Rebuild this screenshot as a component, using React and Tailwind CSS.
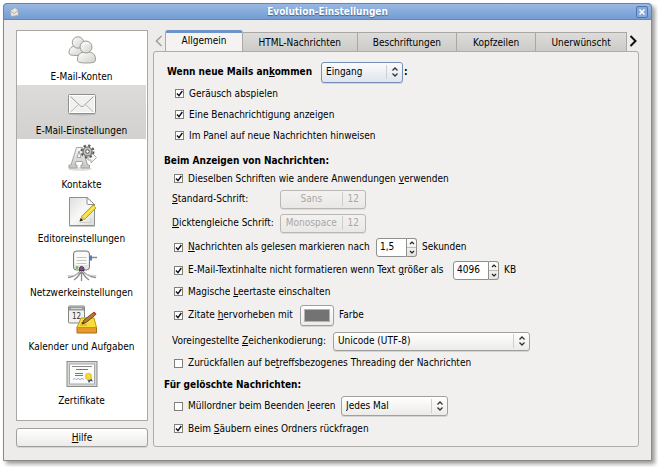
import { useState } from "react";

function AccountsIcon() {
  return (
    <svg width="30" height="30" viewBox="0 0 30 30" aria-hidden="true">
      <defs>
        <linearGradient id="person" x1="0" y1="0" x2="1" y2="1">
          <stop offset="0" stopColor="#ffffff" />
          <stop offset="1" stopColor="#cfcfcb" />
        </linearGradient>
      </defs>
      <g fill="url(#person)" stroke="#9b9b97" strokeWidth="1">
        <path d="M2 18 C2 13 4.500 11 10 11 S17 13 17 18 C17 20 14 20.500 9.500 20.500 S2 20 2 18Z" />
        <circle cx="11" cy="7.500" r="5.700" />
        <path d="M10.500 25 C10.500 19 13 17 19.500 17 S28.500 19 28.500 25 C28.500 27.500 25 28 19.500 28 S10.500 27.500 10.500 25Z" />
        <circle cx="19" cy="12" r="6" />
      </g>
      <path d="M15.500 10 C17.500 7.500 20.500 7.500 22.500 9.500" stroke="#fff" fill="none" />
    </svg>
  );
}

function MailIcon() {
  return (
    <svg width="30" height="30" viewBox="0 0 30 30" aria-hidden="true">
      <ellipse cx="15" cy="25" rx="14" ry="1.500" fill="#b9b9b7" />
      <rect x="1.500" y="5.500" width="27" height="19" rx="1" fill="#f1f1ef" stroke="#8f8f8d" />
      <rect x="2.500" y="6.500" width="25" height="17" fill="none" stroke="#fff" />
      <path d="M3.500 7.500 L13.500 17 Q15 18.200 16.500 17 L26.500 7.500" fill="none" stroke="#a3a3a1" />
      <path d="M3.500 23 L11.500 15.500 M26.500 23 L18.500 15.500" fill="none" stroke="#b9b9b7" />
    </svg>
  );
}

function ContactsIcon() {
  return (
    <svg width="30" height="30" viewBox="0 0 30 30" aria-hidden="true">
      <defs>
        <linearGradient id="slab" x1="0" y1="0" x2="0" y2="1">
          <stop offset="0" stopColor="#f8f8f6" />
          <stop offset="1" stopColor="#c4c4c1" />
        </linearGradient>
      </defs>
      <ellipse cx="13" cy="26" rx="12" ry="1.800" fill="#dededc" />
      <path d="M2 25 V22 H4 L9.500 4.500 H15.500 L20.500 22 H22.500 V25 H14 V22 H16 L15 18.500 H9 L8 22 H10 V25Z M10 14.500 H14 L12 8Z" fill="url(#slab)" stroke="#a3a3a1" strokeWidth="1" fillRule="evenodd" />
      <path d="M21 12 H25 V10 L29.500 14.500 L24 20 V17 H21Z" fill="#f6f6f4" stroke="#a8a8a6" />
      <circle cx="20.500" cy="8.500" r="6" fill="none" stroke="#565856" strokeWidth="2" strokeDasharray="2.350 2.350" />
      <circle cx="20.500" cy="8.500" r="4.500" fill="#c0c2bf" stroke="#6b6d6b" strokeWidth="1.200" />
      <circle cx="20.500" cy="8.500" r="1.800" fill="#fff" stroke="#565856" />
    </svg>
  );
}

function EditorIcon() {
  return (
    <svg width="30" height="30" viewBox="0 0 30 30" aria-hidden="true">
      <defs>
        <linearGradient id="paper" x1="0" y1="0" x2="1" y2="1">
          <stop offset="0" stopColor="#dededc" />
          <stop offset="0.500" stopColor="#f8f8f7" />
          <stop offset="1" stopColor="#dcdcda" />
        </linearGradient>
      </defs>
      <path d="M2 29.500 H28" stroke="#c9c9c7" />
      <path d="M2.500 0.500 H20 L27.500 7.500 V28.500 H2.500Z" fill="url(#paper)" stroke="#8d8f8c" />
      <path d="M20 0.500 L27.500 7.500 H21 Q20 7.500 20 6.500Z" fill="#fff" stroke="#8d8f8c" />
      <path d="M13 25.500 H24 V21" stroke="#cfcfcd" fill="none" />
      <path d="M13 24 L15 19 L26 8 L29 11 L18 22Z" fill="#f5dc2e" stroke="#b99b08" strokeWidth="0.900" />
      <path d="M16.500 20.500 L27.500 9.500" stroke="#fff27c" strokeWidth="1" />
      <path d="M13 24 L14.800 19.200 L17.800 22.200Z" fill="#dcb88a" />
      <path d="M12.500 24.500 L13.800 21 L16 23.300Z" fill="#222" />
    </svg>
  );
}

function NetworkIcon() {
  return (
    <svg width="30" height="32" viewBox="0 0 30 32" aria-hidden="true">
      <path d="M14.500 19 C11 25 6 27 1 27.500 M14.500 19 C13 25 10 28 7 30 M14.500 19 C18 25 23 27 29 27.500 M14.500 19 C16 25 19 28 22 30 M14.500 18 V31" fill="none" stroke="#8b8d8a" strokeWidth="1.300" />
      <path d="M14 21 C10 26 5 26 0.500 25.500 M15 21 C19 26 24 25 29.500 25.500" fill="none" stroke="#c9cac8" />
      <path d="M23 7.500 H30" stroke="#888a88" strokeWidth="1.500" />
      <rect x="22" y="5.500" width="3" height="5" fill="#4f7fb5" />
      <rect x="6.500" y="1" width="16" height="19" rx="3" fill="#e4e4e2" stroke="#777976" />
      <rect x="7.500" y="2" width="14" height="13" rx="2" fill="#fafaf9" />
      <path d="M9.500 7.500 H19.500 M9.500 10.500 H19.500 M9.500 13.500 H19.500" stroke="#c6c7c5" />
      <circle cx="10" cy="17.500" r="1.300" fill="#56c11b" />
      <path d="M12.500 20.500 V18.500 Q12.500 16.500 14.500 16.500 T17 18.500 V20.500Z" fill="#7a5584" stroke="#4d3154" />
    </svg>
  );
}

function CalendarIcon() {
  return (
    <svg width="30" height="30" viewBox="0 0 30 30" aria-hidden="true">
      <rect x="1.500" y="1" width="16" height="17" rx="1" fill="#f1f1ef" stroke="#858784" />
      <rect x="2" y="1.500" width="15" height="4" fill="#9a9c99" />
      <path d="M4 3.500 H15" stroke="#d5d6d4" />
      <text x="5" y="13.500" fontSize="8" fontFamily="DejaVu Sans Condensed, DejaVu Sans, sans-serif" fill="#333">12</text>
      <path d="M10 22 H29.500 V28 H10Z" fill="#e79a2c" stroke="#b06b12" />
      <path d="M10 22.500 L14 13 H27 L29.500 22.500Z" fill="#f7dc3c" stroke="#bd9a15" />
      <path d="M13 20 H20 M14 17.500 H18" stroke="#caa51d" />
      <path d="M15 19 L17 15 L26.500 7.500 L28.500 9.800 L19 17.500Z" fill="#b9783a" stroke="#62401e" strokeWidth="0.900" />
      <path d="M26 7.500 L27.500 6.800 L29.500 9 L28.500 10Z" fill="#d92626" />
      <path d="M15 19 L16 16.900 L17.400 18.200Z" fill="#222" />
    </svg>
  );
}

function CertificateIcon() {
  return (
    <svg width="32" height="30" viewBox="0 0 32 30" aria-hidden="true">
      <rect x="1" y="2.500" width="30" height="25" fill="#d6d8d5" stroke="#8b8d8a" />
      <rect x="3.500" y="5" width="25" height="20" fill="#fbfbfa" stroke="#a7a9a6" />
      <path d="M6 7.500 H26" stroke="#8a8c89" />
      <path d="M10 10.500 H22 M9 14.500 H17 M9 16.500 H17" stroke="#777976" />
      <path d="M7 20.500 L9 19.500 L10 20.500 L12 19.500 L14 20.500 L16 19.500 L18 20.500" fill="none" stroke="#95acd0" />
      <path d="M21 20 L23 24 L24.500 22 L27 22.500 L25 19Z" fill="#2f5590" />
      <circle cx="22.500" cy="17.500" r="3.200" fill="#f6d935" stroke="#e5c63a" />
    </svg>
  );
}

const categories = [
  { label: "E-Mail-Konten", Icon: AccountsIcon },
  { label: "E-Mail-Einstellungen", Icon: MailIcon },
  { label: "Kontakte", Icon: ContactsIcon },
  { label: "Editoreinstellungen", Icon: EditorIcon },
  { label: "Netzwerkeinstellungen", Icon: NetworkIcon },
  { label: "Kalender und Aufgaben", Icon: CalendarIcon },
  { label: "Zertifikate", Icon: CertificateIcon },
];

const tabs = [
  { label: "Allgemein", grow: "grow-[77]" },
  { label: "HTML-Nachrichten", grow: "grow-[115]" },
  { label: "Beschriftungen", grow: "grow-[100]" },
  { label: "Kopfzeilen", grow: "grow-[79]" },
  { label: "Unerwünscht", grow: "grow-[91]" },
];

function Key({ children }) {
  return <span className="underline underline-offset-1">{children}</span>;
}

function Check({ id, checked = false, height = "h-[21px]", width = "", children }) {
  return (
    <div className={`flex shrink-0 items-center gap-[5px] ${height} ${width}`}>
      <span className="grid size-[9px] shrink-0">
        <input
          id={id}
          type="checkbox"
          defaultChecked={checked}
          className="peer col-start-1 row-start-1 size-[9px] appearance-none border border-[#7f7f7c] bg-white"
        />
        <svg
          viewBox="0 0 9 9"
          className="pointer-events-none col-start-1 row-start-1 hidden size-[9px] peer-checked:block"
          aria-hidden="true"
        >
          <path d="M2 4.500 L4 6.700 L7.300 2" fill="none" stroke="#111" strokeWidth="1.400" />
        </svg>
      </span>
      <label htmlFor={id} className="whitespace-nowrap">
        {children}
      </label>
    </div>
  );
}

function Chevrons() {
  return (
    <svg width="8" height="10" viewBox="0 0 8 10" fill="none" stroke="#333" strokeWidth="1.300" aria-hidden="true">
      <path d="M1.500 3.500 L4 1 L6.500 3.500 M1.500 6.500 L4 9 L6.500 6.500" />
    </svg>
  );
}

function Dropdown({ id, label, value, size, focused = false }) {
  const look = focused
    ? "border-[#7590b8] bg-gradient-to-b from-[#fafbfd] to-[#dfe5ee]"
    : "border-[#a0a09d] bg-gradient-to-b from-white to-[#ecebe9]";
  return (
    <span className={`grid shrink-0 items-center ${size}`}>
      <select
        id={id}
        aria-label={label}
        className={`col-start-1 row-start-1 h-full w-full appearance-none rounded-[3px] border pl-1 shadow-[0_1px_0_#d4d3d1] ${look}`}
      >
        <option>{value}</option>
      </select>
      <span className="pointer-events-none col-start-1 row-start-1 flex h-[14px] items-center justify-self-end border-l border-[#cfcecb] px-1">
        <Chevrons />
      </span>
    </span>
  );
}

function SpinBox({ id, label, value, width }) {
  return (
    <span className="flex h-[19px] shrink-0">
      <input
        id={id}
        aria-label={label}
        defaultValue={value}
        className={`rounded-l-[3px] border border-[#8f8f8c] bg-white pl-[3px] ${width}`}
      />
      <span className="flex w-[10px] flex-col rounded-r-[3px] border border-l-0 border-[#8f8f8c] bg-gradient-to-b from-white to-[#e4e3e1]">
        <button type="button" aria-label="Mehr" className="flex flex-1 items-center justify-center border-b border-[#bdbcb9]">
          <svg width="6" height="4" viewBox="0 0 6 4" fill="none" stroke="#222" strokeWidth="1.200">
            <path d="M1 3 L3 1 L5 3" />
          </svg>
        </button>
        <button type="button" aria-label="Weniger" className="flex flex-1 items-center justify-center">
          <svg width="6" height="4" viewBox="0 0 6 4" fill="none" stroke="#222" strokeWidth="1.200">
            <path d="M1 1 L3 3 L5 1" />
          </svg>
        </button>
      </span>
    </span>
  );
}

function FontButton({ id, name, size }) {
  return (
    <button
      id={id}
      type="button"
      disabled
      className="flex h-[19px] w-[86px] items-center rounded-[3px] border border-[#b9b8b5] bg-gradient-to-b from-[#f3f2f1] to-[#e9e8e6] text-[#a9a8a5] shadow-[0_1px_0_#dddcda]"
    >
      <span className="flex-1 text-center">{name}</span>
      <span className="border-l border-[#cfcecb] pl-[5px] pr-[6px]">{size}</span>
    </button>
  );
}

function Sidebar() {
  const [selected, setSelected] = useState(1);
  return (
    <div className="flex w-[132px] shrink-0 flex-col gap-[7px]">
      <nav className="flex-1 border border-[#a9a8a5] bg-white pr-px">
        {categories.map(({ label, Icon }, i) => (
          <button
            key={label}
            type="button"
            onClick={() => setSelected(i)}
            className={`flex h-[54px] w-full flex-col items-center justify-between pb-px pt-[4px] ${
              i === selected ? "bg-gradient-to-b from-[#dcdbd9] to-[#d2d1cf]" : ""
            }`}
          >
            <span className="flex h-[30px] items-center">
              <Icon />
            </span>
            <span className="whitespace-nowrap leading-[14px]">{label}</span>
          </button>
        ))}
      </nav>
      <button
        type="button"
        className="h-[19px] rounded-[3px] border border-[#a0a09d] bg-gradient-to-b from-white to-[#ecebe9] shadow-[0_1px_0_#d4d3d1]"
      >
        <Key>H</Key>ilfe
      </button>
    </div>
  );
}

function TabBar() {
  const [active, setActive] = useState(0);
  return (
    <div className="flex h-[21px] items-end">
      <button type="button" aria-label="Vorherige Reiter" className="flex h-full w-[12px] shrink-0 items-center justify-center">
        <svg width="8" height="12" viewBox="0 0 8 12" fill="none" stroke="#a3a29f" strokeWidth="1.600">
          <path d="M6.500 1 L1.500 6 L6.500 11" />
        </svg>
      </button>
      <div role="tablist" className="flex h-full flex-1 items-end">
        {tabs.map(({ label, grow }, i) => (
          <button
            key={label}
            type="button"
            role="tab"
            aria-selected={i === active}
            onClick={() => setActive(i)}
            className={`basis-0 whitespace-nowrap ${grow} ${
              i === active
                ? "-mb-px h-[22px] rounded-t-[3px] border-x border-t-[3px] border-x-[#a9a8a5] border-t-[#6d93c9] bg-[#f4f3f2] pb-[3px]"
                : "h-[19px] border-r border-t border-[#a9a8a5] bg-gradient-to-b from-[#dddcda] to-[#cccbc8] pt-px"
            }`}
          >
            {label}
          </button>
        ))}
      </div>
      <button type="button" aria-label="Weitere Reiter" className="flex h-full w-[12px] shrink-0 items-center justify-center">
        <svg width="8" height="12" viewBox="0 0 8 12" fill="none" stroke="#111" strokeWidth="2">
          <path d="M1.500 1 L6.500 6 L1.500 11" />
        </svg>
      </button>
    </div>
  );
}

function GeneralPanel() {
  return (
    <div className="flex-1 rounded-[3px] border border-[#adacaa] bg-[#f1f0ef] pb-[6px] pl-[10px] pt-[9px]">
      <div className="flex h-[22px] items-center gap-[3px] pl-[3px]">
        <label htmlFor="arrival" className="w-[151px] whitespace-nowrap font-bold">
          Wenn neue Mails an<Key>k</Key>ommen
        </label>
        <span className="flex items-center gap-px">
          <Dropdown id="arrival" value="Eingang" size="h-[21px] w-[82px]" focused />
          <span className="font-bold">:</span>
        </span>
      </div>
      <div className="pl-[11px]">
        <Check id="sound" checked>Geräusch abspielen</Check>
        <Check id="notify" checked>Eine Benachrichtigung anzeigen</Check>
        <Check id="panel" checked>Im Panel auf neue Nachrichten hinweisen</Check>
      </div>

      <h2 className="mt-[6px] h-[18px] font-bold leading-[18px]">Beim Anzeigen von Nachrichten:</h2>
      <div className="pl-[10px]">
        <Check id="same-fonts" checked height="h-[17px]">
          Dieselben Schriften wie andere Anwendungen <Key>v</Key>erwenden
        </Check>
      </div>
      <div className="pl-2">
        <div className="flex h-6 items-center">
          <label htmlFor="font" className="w-[108px]">
            <Key>S</Key>tandard-Schrift:
          </label>
          <FontButton id="font" name="Sans" size="12" />
        </div>
        <div className="flex h-6 items-center">
          <label htmlFor="mono" className="w-[108px] whitespace-nowrap">
            <Key>D</Key>icktengleiche Schrift:
          </label>
          <FontButton id="mono" name="Monospace" size="12" />
        </div>
      </div>
      <div className="pl-[10px]">
        <div className="flex h-6 items-center gap-[5px]">
          <Check id="mark-read" checked width="w-[197px]">
            <Key>N</Key>achrichten als gelesen markieren nach
          </Check>
          <SpinBox id="seconds" label="Sekunden" value="1,5" width="w-[31px]" />
          <label htmlFor="seconds">Sekunden</label>
        </div>
        <div className="flex h-[22px] items-center gap-[5px]">
          <Check id="no-format" checked width="w-[274px]">
            E-Mail-Textinhalte nicht formatieren wenn Text <Key>g</Key>rößer als
          </Check>
          <SpinBox id="limit" label="KB" value="4096" width="w-[36px]" />
          <label htmlFor="limit">KB</label>
        </div>
        <Check id="magic-space" checked>
          Magische <Key>L</Key>eertaste einschalten
        </Check>
        <div className="flex h-[26px] items-center gap-[5px]">
          <Check id="quotes" checked width="w-[121px]">
            Zitate <Key>h</Key>ervorheben mit
          </Check>
          <button
            type="button"
            id="quote-color"
            aria-label="Farbe wählen"
            className="flex h-[21px] w-[34px] items-center justify-center rounded-[3px] border border-[#a0a09d] bg-gradient-to-b from-white to-[#ecebe9] shadow-[0_1px_0_#d4d3d1]"
          >
            <span className="h-[13px] w-[26px] border border-[#b5b4b2] bg-[#737373]" />
          </button>
          <label htmlFor="quote-color">Farbe</label>
        </div>
      </div>
      <div className="flex h-[26px] items-center gap-[5px] pl-2">
        <label htmlFor="charset" className="w-[156px] whitespace-nowrap">
          Voreingestellte <Key>Z</Key>eichenkodierung:
        </label>
        <Dropdown id="charset" value="Unicode (UTF-8)" size="h-[19px] w-[197px]" />
      </div>
      <div className="pl-[10px]">
        <Check id="threading" height="h-[18px]">
          Zurückfallen auf be<Key>t</Key>reffsbezogenes Threading der Nachrichten
        </Check>
      </div>

      <h2 className="mt-1 h-[18px] font-bold leading-[18px]">Für gelöschte Nachrichten:</h2>
      <div className="pl-[10px]">
        <div className="flex h-6 items-center gap-[5px]">
          <Check id="trash" width="w-[162px]">
            Müllordner beim Beenden <Key>l</Key>eeren
          </Check>
          <Dropdown id="trash-when" label="Zeitpunkt" value="Jedes Mal" size="h-[20px] w-[107px]" />
        </div>
        <Check id="expunge" checked>
          Beim <Key>S</Key>äubern eines Ordners rückfragen
        </Check>
      </div>
    </div>
  );
}

export default function App() {
  return (
    <div className="flex min-h-screen flex-col bg-white pb-[6px] pl-[3px] pr-[6px] pt-[3px] font-['DejaVu_Sans_Condensed','DejaVu_Sans',sans-serif] text-[10px] leading-[14px] text-black">
      <main className="flex flex-1 flex-col rounded-t-[4px] border border-[#8a8a8a] bg-[#edeceb] shadow-[3px_3px_4px_#999]">
        <header className="-mx-px -mt-px flex h-[17px] items-center rounded-t-[4px] border border-[#5f86bd] bg-gradient-to-b from-[#98b8e2] to-[#749dd3] pl-[5px] pr-[3px]">
          <svg width="10" height="10" viewBox="0 0 10 10" aria-hidden="true">
            <path d="M1 4 L6 0.500 L9 3 L9.500 8.500 L2 9.500Z" fill="#e4e4e2" stroke="#a2a29f" strokeWidth="0.800" />
            <path d="M1.500 4.500 L5.500 6.500 L8.500 3.500" fill="none" stroke="#a2a29f" strokeWidth="0.800" />
          </svg>
          <h1 className="flex-1 text-center font-bold leading-[14px] text-white [text-shadow:0_1px_1px_#3c5f93]">
            Evolution-Einstellungen
          </h1>
          <button
            type="button"
            aria-label="Schließen"
            className="flex size-[12px] items-center justify-center rounded-[2px] border border-[#4f76ad] bg-[#86a9d9]"
          >
            <svg width="8" height="8" viewBox="0 0 8 8" stroke="#fff" strokeWidth="1.500" aria-hidden="true">
              <path d="M1.500 1.500 L6.500 6.500 M6.500 1.500 L1.500 6.500" />
            </svg>
          </button>
        </header>
        <div className="flex flex-1 gap-[5px] pb-[13px] pl-3 pr-3 pt-[10px]">
          <Sidebar />
          <div className="flex flex-1 flex-col">
            <TabBar />
            <GeneralPanel />
          </div>
        </div>
      </main>
    </div>
  );
}
